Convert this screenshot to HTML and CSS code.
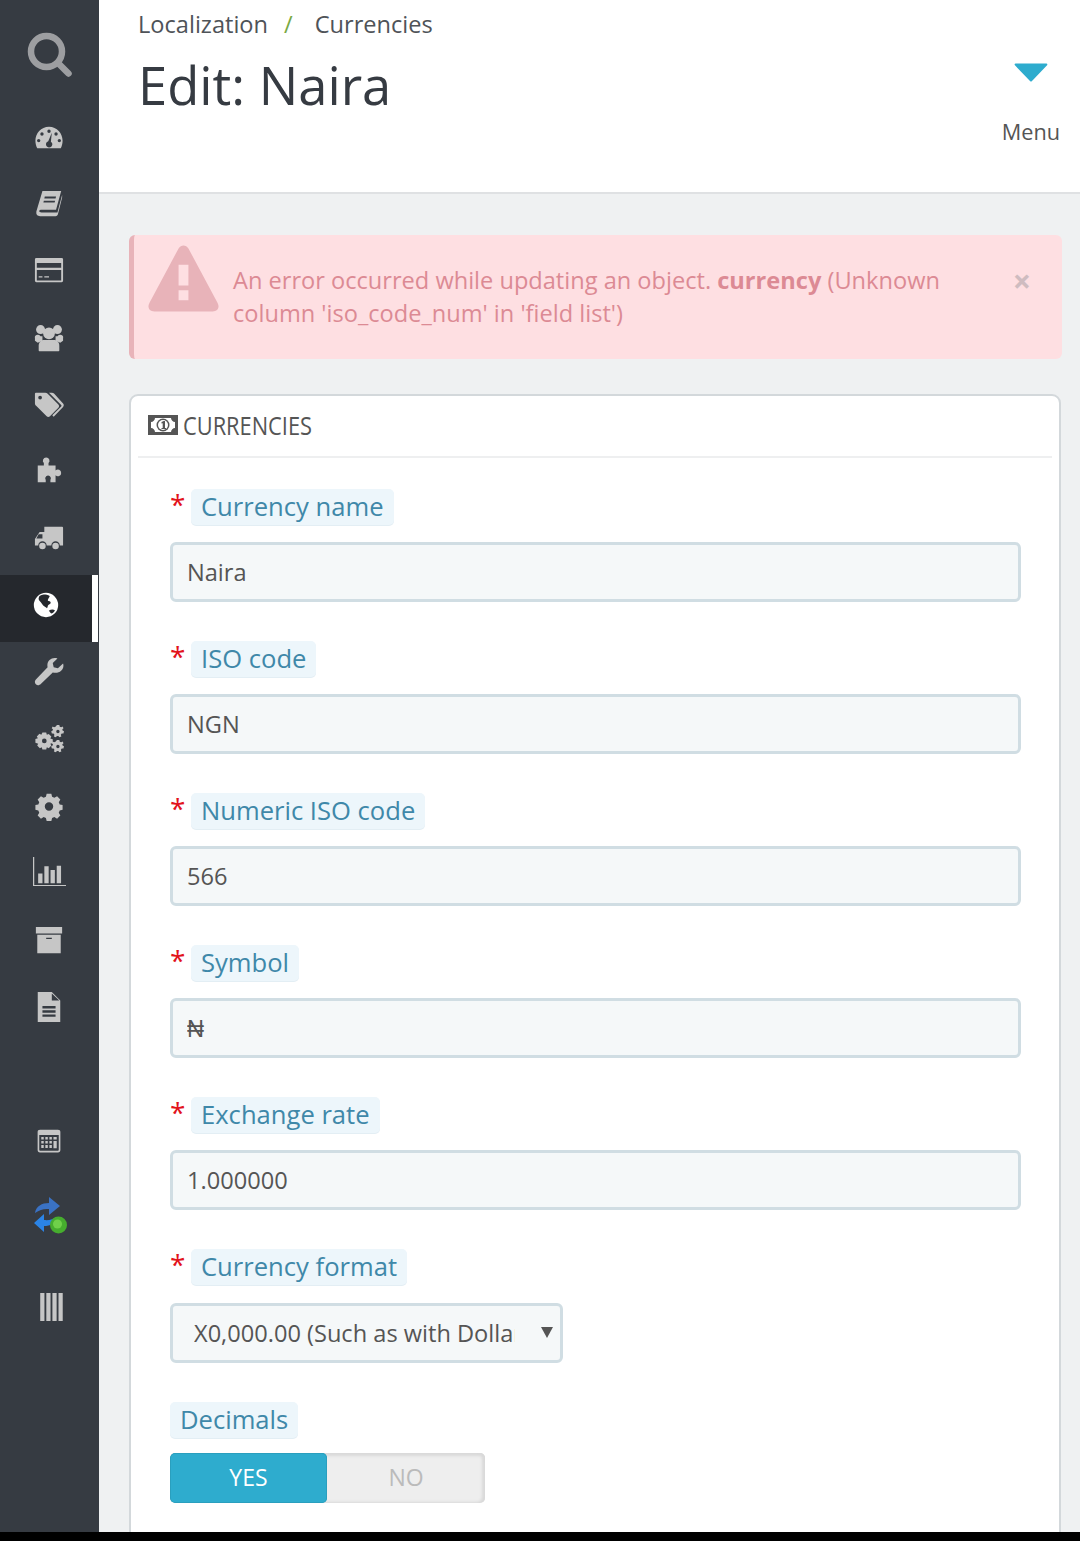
FILE: index.html
```html
<!DOCTYPE html>
<html lang="en">
<head>
<meta charset="utf-8">
<title>Edit: Naira</title>
<link rel="stylesheet" href="styles.css">
</head>
<body>
<div class="screen">
  <div class="app">
    <nav class="sidebar">
      <div class="search-item">
        <svg class="search-icon" viewBox="0 0 45 45"><circle cx="19.5" cy="19.5" r="15.5" fill="none" stroke="currentColor" stroke-width="6.5"/><path d="M31 31L41.500 41.500" fill="none" stroke="currentColor" stroke-width="6.500" stroke-linecap="round"/></svg>
      </div>
      <div class="nav-item"><svg class="ico" viewBox="0 -2 32 32"><path fill-rule="evenodd" d="M16 3C7.500 3 1.500 10 1.500 18c0 3 .8 6 2 8h25c1.200-2 2-5 2-8C30.500 10 24.500 3 16 3zM16 6a1.800 1.800 0 1 1 0 3.600A1.800 1.800 0 0 1 16 6zM8.500 9a1.800 1.800 0 1 1 0 3.600 1.800 1.800 0 0 1 0-3.600zM23.500 9a1.800 1.800 0 1 1 0 3.600 1.800 1.800 0 0 1 0-3.600zM5 16a1.800 1.800 0 1 1 0 3.600A1.800 1.800 0 0 1 5 16zM27 16a1.800 1.800 0 1 1 0 3.600 1.800 1.800 0 0 1 0-3.600zM19 9.500l-1 9.500c1.200.8 1.700 2 1.500 3.300-.3 1.800-1.800 3-3.700 2.800-1.900-.2-3.200-1.900-3-3.700.2-1.400 1.100-2.400 2.400-2.800z"/></svg></div>
      <div class="nav-item"><svg class="ico" viewBox="0 0 32 32"><path fill-rule="evenodd" d="M9 2h20l-5.500 20H8c-1.500 0-2.500.7-2.500 1.500S6.500 25 8 25h17l5-19v3l-4.500 18c-.3 1-1 2-2.500 2H6.500C3.500 29 2 27 2.500 24zM11.500 8l-.5 2h12l.5-2zM10.500 12.500l-.5 2h12l.5-2z"/></svg></div>
      <div class="nav-item"><svg class="ico" viewBox="0 1 32 32"><path fill-rule="evenodd" d="M2.500 3h27A1.500 1.500 0 0 1 31 4.500v23a1.500 1.500 0 0 1-1.500 1.500h-27A1.500 1.500 0 0 1 1 27.500v-23A1.500 1.500 0 0 1 2.500 3zM3 8.500v5h26v-5zM3 16v11h26V16zM5 22.500h4v1.500H5zM11 22.500h5v1.500h-5z"/></svg></div>
      <div class="nav-item"><svg class="ico" viewBox="0 1 32 32"><circle cx="7" cy="8" r="4.800"/><circle cx="25" cy="8" r="4.800"/><circle cx="16" cy="12" r="6.300"/><circle cx="4" cy="16.500" r="3"/><circle cx="28" cy="16.500" r="3"/><path d="M5 30V25c0-4 2.500-6 6-6h10c3.500 0 6 2 6 6v5c0 .8-.5 1-1 1H6c-.5 0-1-.2-1-1z"/><path d="M1 15h8v5l-5 2-3-2zM23 15h8v5l-3 2-5-2z"/></svg></div>
      <div class="nav-item"><svg class="ico" viewBox="0 0 32 32"><path fill-rule="evenodd" d="M2 3h10c1 0 2 .4 2.600 1L26 15.500c1 1 1 2.500 0 3.500L17 28c-1 1-2.500 1-3.500 0L2 16.500C1.400 16 1 15 1 14V4c0-.6.4-1 1-1zM6.500 6a2 2 0 1 0 0 4 2 2 0 0 0 0-4z"/><path d="M16 3h3c1 0 2 .4 2.600 1L31 14.500c1 1.200 1 2.500 0 3.500l-10 10.500-1.500-1.500L29 17.500c.5-.5.500-1 0-1.500L16 3z"/></svg></div>
      <div class="nav-item"><svg class="ico" viewBox="0 1 32 32"><path d="M13 2.500a3.500 3.500 0 0 1 2.500 6V11H23v5.500a3.500 3.500 0 0 1 6 2.500 3.500 3.500 0 0 1-6 2.500V29h-5.500v-2.500a3 3 0 1 0-5 0V29H4V11h6.500V8.500a3.500 3.500 0 0 1 2.500-6z"/></svg></div>
      <div class="nav-item"><svg class="ico" viewBox="0 0 32 32"><path fill-rule="evenodd" d="M11 4h19a1 1 0 0 1 1 1v19h-3.500a4.500 4.500 0 0 0-9 0h-5a4.500 4.500 0 0 0-9 0H1v-7l5-7.500h5zM5 12l-2.500 4.500H9V12z"/><circle cx="9" cy="24.500" r="3.500"/><circle cx="23" cy="24.500" r="3.500"/></svg></div>
      <div class="nav-item active"><svg class="ico" viewBox="0 0 32 32"><path fill-rule="evenodd" d="M16 3a13 13 0 1 1 0 26 13 13 0 0 1 0-26zM9 6.500c-1 2 -1.500 4 .5 5.500 1.500 1.200 2 3 3.500 4.500 1.500 1.500 3 1.800 4 3 1-1 .5-2.500 1.500-3.500 1-1 2.500-1 2.500-2.500s-2-1.500-3-2c-.5-1.500 1.500-3 2-5-2-1.300-4-1.700-6.500-1.700-1.500.1-3 .7-4.500 1.700zM19 22c1 1 2 3 3 3 1.500-.5 3-2 3.500-3.500-1.500-1-4.500-1-6.500.5z"/></svg></div>
      <div class="nav-item"><svg class="ico" viewBox="0 0 32 32"><path d="M31 7l-5.500 5-4.500-1-1-4.500 5-5C19-.5 13 4 14.500 11L2.500 23.500c-2 2-2 4-.5 5.500s3.500 1.500 5.500-.5L20 16.500C27 18.500 33 13 31 7z"/></svg></div>
      <div class="nav-item"><svg class="ico" viewBox="0 0 32 32"><path fill-rule="evenodd" d="M9 9h4l.7 2.500 2-.9 2.800 2.800-1.100 2 2.600.8v4l-2.600.8 1.100 2-2.800 2.800-2-1.100-.7 2.600H9l-.8-2.600-2 1.100-2.800-2.800 1.100-2L1.500 20v-4l2.600-.8-1.100-2L5.800 10.400l2 1.100zM11 15.500a2.500 2.500 0 1 0 0 5 2.500 2.500 0 0 0 0-5z"/><path fill-rule="evenodd" d="M24.500 1h2.500l.5 1.800 1.500.6 1.500-.8 1 1.800-1.300 1.100.3 1.500 1.500.8-.6 2.400-1.800 0-1 1.300.6 1.700-2.200 1-1-1.500h-1.600l-1 1.500-2.200-1 .6-1.700-1-1.300-1.800 0-.6-2.400 1.500-.8.300-1.500-1.300-1.100 1-1.800 1.500.8 1.500-.6zM25.500 6.200a1.800 1.800 0 1 0 0 3.600 1.800 1.800 0 0 0 0-3.600z"/><path fill-rule="evenodd" d="M24.500 17h2.500l.5 1.800 1.500.6 1.500-.8 1 1.800-1.300 1.100.3 1.500 1.500.8-.6 2.400-1.800 0-1 1.300.6 1.700-2.200 1-1-1.500h-1.600l-1 1.500-2.200-1 .6-1.700-1-1.300-1.800 0-.6-2.400 1.500-.8.300-1.500-1.300-1.100 1-1.800 1.500.8 1.500-.6zM25.500 22.200a1.800 1.800 0 1 0 0 3.600 1.800 1.800 0 0 0 0-3.600z"/></svg></div>
      <div class="nav-item"><svg class="ico" viewBox="0 0 32 32"><path fill-rule="evenodd" d="M13.500 3h5l.8 3.200 2.400 1 2.900-1.700 3.500 3.500-1.700 2.900 1 2.400 3.100.7v5l-3.100.8-1 2.400 1.700 2.800-3.500 3.500-2.900-1.700-2.400 1-.8 3.200h-5l-.8-3.200-2.400-1-2.900 1.700-3.500-3.500 1.700-2.800-1-2.400-3.100-.8v-5l3.100-.7 1-2.400-1.700-2.900 3.500-3.500 2.900 1.700 2.400-1zM16 12a4.500 4.500 0 1 0 0 9 4.500 4.500 0 0 0 0-9z"/></svg></div>
      <div class="nav-item"><svg class="ico ico-lg" viewBox="0 0 32 32"><path d="M0 1h1.200v27H32v1.200H0zM5 17h4.200v9.500H5zM11 10h4.200v16.500H11zM17 13.500h4.200v13H17zM23 9.500h4.200v17H23z"/></svg></div>
      <div class="nav-item"><svg class="ico" viewBox="0 0 32 32"><path fill-rule="evenodd" d="M2 2h28v7H2zM3.500 10.500h25V30h-25zM13 13.500v1.500h6v-1.500z"/></svg></div>
      <div class="nav-item"><svg class="ico" viewBox="0 0 32 32"><path fill-rule="evenodd" d="M4 0h15l9 9v23H4zM19 1.500V9h8zM9 15v2.500h14V15zM9 19.500V22h14v-2.500zM9 24v2.500h14V24z"/></svg></div>
      <div class="nav-spacer"></div>
      <div class="nav-item"><svg class="ico ico-sm" viewBox="0 0 32 32"><path fill-rule="evenodd" d="M5 2h22c2 0 3 1 3 3v22c0 2-1 3-3 3H5c-2 0-3-1-3-3V5c0-2 1-3 3-3zM4 8.500V27c0 .6.400 1 1 1h22c.6 0 1-.4 1-1V8.500zM6.500 11h3v3h-3zM11.500 11h3v3h-3zM16.500 11h3v3h-3zM21.500 11h4v3h-4zM6.500 16h3v3h-3zM11.500 16h3v3h-3zM16.500 16h3v3h-3zM21.500 16h4v9h-4zM6.500 21h3v3.500h-3zM11.500 21h3v3.500h-3zM16.500 21h3v3.500h-3z"/></svg></div>
      <div class="nav-item nav-item-sync">
        <svg class="sync" viewBox="0 0 34 40"><path fill="#3a72c4" d="M1 17C2 10 8 7 15 7V1l11 9-11 9v-6c-5-.5-9 .5-14 4z"/><path fill="#2b84e6" d="M23 21c-1 7-7 9-13 9v6L0 27l10-9v6c5 .5 9-.5 13-3z"/><circle cx="24.500" cy="29" r="8.500" fill="#46ad2e"/><circle cx="23.500" cy="28" r="4.500" fill="#6fd04a"/></svg>
      </div>
      <div class="nav-item nav-item-bars"><svg class="ico" viewBox="0 0 32 32"><path d="M4.500 1H9v30H4.500zM11 1h4.500v30H11zM17.500 1H22v30h-4.500zM24 1h4.500v30H24z"/></svg></div>
    </nav>
    <main class="main">
      <header class="page-head">
        <div class="head-text">
          <div class="crumbs"><span>Localization</span><span class="crumb-sep">/</span><span>Currencies</span></div>
          <h1 class="title">Edit: Naira</h1>
        </div>
        <div class="menu-toggle">
          <svg class="menu-arrow" viewBox="0 0 32 18"><path d="M1.500 1.500h29L16 16.500z"/></svg>
          <span class="menu-label">Menu</span>
        </div>
      </header>
      <div class="content">
        <div class="alert">
          <svg class="alert-icon" viewBox="0 0 72 68"><path fill-rule="evenodd" d="M31 3.500c2.500-4 7.500-4 10 0l29.500 55c2.500 4.500 .5 9-5 9H6.500c-5.500 0-7.500-4.500-5-9zM31 20v21h10V20zM31 46v10h10V46z"/></svg>
          <p class="alert-text">An error occurred while updating an object. <b>currency</b> (Unknown column 'iso_code_num' in 'field list')</p>
          <span class="alert-close">×</span>
        </div>
        <section class="panel">
          <div class="panel-head">
            <svg class="money" viewBox="0 0 30 20"><path fill-rule="evenodd" d="M0 0h30v20H0zM7 3c0 2-2 4-4 4v6c2 0 4 2 4 4h16c0-2 2-4 4-4V7c-2 0-4-2-4-4z"/><circle cx="15" cy="10" r="6.500"/><circle cx="15" cy="10" r="5" fill="#fff"/><path d="M13.500 7l2.200-1h1.300v7h1v1h-4.500v-1h1.200V8.200l-1.200.4z"/></svg>
            <span class="panel-title">CURRENCIES</span>
          </div>
          <div class="form-body">
            <div class="field"><div class="label-row"><span class="req">*</span><label class="chip">Currency name</label></div><input class="text-input" value="Naira"></div>
            <div class="field"><div class="label-row"><span class="req">*</span><label class="chip">ISO code</label></div><input class="text-input" value="NGN"></div>
            <div class="field"><div class="label-row"><span class="req">*</span><label class="chip">Numeric ISO code</label></div><input class="text-input" value="566"></div>
            <div class="field"><div class="label-row"><span class="req">*</span><label class="chip">Symbol</label></div><input class="text-input" value="₦"></div>
            <div class="field"><div class="label-row"><span class="req">*</span><label class="chip">Exchange rate</label></div><input class="text-input" value="1.000000"></div>
            <div class="field field-format"><div class="label-row label-row-format"><span class="req">*</span><label class="chip">Currency format</label></div>
              <div class="select-wrap"><select class="select"><option>X0,000.00 (Such as with Dollars)</option></select><span class="select-arrow"></span></div>
            </div>
            <div class="field"><div class="label-row label-row-plain"><label class="chip">Decimals</label></div>
              <div class="switch"><span class="sw sw-on">YES</span><span class="sw sw-off">NO</span></div>
            </div>
          </div>
        </section>
      </div>
    </main>
  </div>
  <div class="bottom-bar"></div>
</div>
</body>
</html>
```

FILE: styles.css
```css
* { box-sizing: border-box; }
html, body { margin: 0; padding: 0; }
body { font-family: "Open Sans", "Noto Sans", sans-serif; color: #555; background: #000; }
.screen { width: 1080px; height: 1541px; overflow: hidden; display: flex; flex-direction: column; }
.app { display: flex; height: 1532px; overflow: hidden; background: #eff1f2; }
.bottom-bar { height: 9px; background: #000; }

.sidebar { width: 99px; flex: none; background: #363b42; color: #c6c6c6; display: flex; flex-direction: column; }
.search-item { height: 107px; flex: none; padding: 32px 0 0 27px; color: #9d9ea1; }
.search-icon { display: block; width: 45px; height: 45px; }
.nav-item { height: 66.900px; flex: none; display: flex; align-items: center; justify-content: center; padding: 0 1px 7px 0; }
.nav-item .ico { width: 30px; height: 30px; fill: currentColor; display: block; }
.nav-item .ico-lg { width: 33px; height: 33px; }
.nav-item .ico-sm { width: 26px; height: 26px; }
.nav-item.active { background: #25282d; color: #fff; border-right: 6px solid #fff; margin-right: 1px; padding-right: 0; }
.nav-spacer { height: 67.400px; flex: none; }
.nav-item-sync { margin-top: 8px; padding-left: 4px; }
.nav-item-bars { margin-top: 24px; padding-left: 3px; }
.sync { width: 34px; height: 40px; display: block; }

.main { flex: 1; min-width: 0; display: flex; flex-direction: column; }
.page-head { height: 194px; flex: none; background: #fff; border-bottom: 2px solid #dfe1e3; display: flex; justify-content: space-between; padding: 7px 20px 0 39px; }
.crumbs { font-size: 23.600px; line-height: 34px; color: #4f5358; display: flex; gap: 16px; }
.crumb-sep { color: #79a944; margin-right: 6px; }
.title { margin: 10px 0 0 0; font-size: 52.500px; line-height: 68px; font-weight: 400; color: #363b42; }
.menu-toggle { display: flex; flex-direction: column; align-items: center; padding-top: 56px; }
.menu-arrow { width: 34px; height: 19px; display: block; fill: #2eacce; stroke: #2eacce; stroke-width: 2; stroke-linejoin: round; margin-top: 0; }
.menu-label { margin-top: 35px; font-size: 21.700px; line-height: 29px; color: #555; }

.content { flex: 1; padding: 41px 18px 0 30px; min-height: 0; }
.alert { height: 124px; background: #fedfe2; border-left: 5px solid #e8b3b9; border-radius: 6px; display: flex; align-items: flex-start; padding: 10px 31px 0 14px; color: #dc8a94; }
.alert-icon { width: 71px; height: 67px; fill: #e8b3b9; flex: none; }
.alert-text { margin: 19px 0 0 14px; font-size: 23.600px; line-height: 33px; flex: 1; }
.alert-close { font-size: 32px; line-height: 34px; font-weight: 700; color: #cfbcc0; margin-top: 19px; margin-left: 60px; }

.panel { margin: 35px 1px 0 0; height: 1200px; background: #fff; border: 2px solid #d3d8db; border-radius: 9px; padding: 0 7px; }
.panel-head { height: 62px; display: flex; align-items: center; gap: 5px; border-bottom: 2px solid #eeeff0; padding: 0 0 2px 10px; font-size: 25.500px; color: #555; }
.panel-title { display: inline-block; transform: scaleX(.855); transform-origin: left center; }
.money { width: 30px; height: 20px; fill: #555; flex: none; }
.form-body { padding: 31px 31px 0 32px; }
.field { height: 152px; }
.field-format { height: 153px; }
.label-row { display: flex; align-items: flex-start; height: 53px; }
.label-row-format { height: 54px; }
.label-row-plain { height: 51px; }
.req { width: 21px; flex: none; color: #e2121b; font-size: 28px; line-height: 30px; }
.chip { height: 36px; padding: 0 10px; border-radius: 5px; background: #edf6fb; box-shadow: 0 1px 0 #e3eef4; color: #3f88a9; font-size: 25.600px; line-height: 35px; }
.text-input { display: block; width: 100%; height: 60px; border: 3px solid #d0dde3; border-radius: 6px; background: #f5f8f9; color: #555; font: 400 23.600px "Open Sans", sans-serif; padding: 0 14px; outline: none; }
.select-wrap { position: relative; width: 393px; height: 60px; }
.select { appearance: none; -webkit-appearance: none; display: block; width: 100%; height: 60px; border: 3px solid #d0dde3; border-radius: 6px; background: #f5f8f9; color: #555; font: 400 23.600px "Open Sans", sans-serif; padding: 0 45px 0 21px; outline: none; }
.select-arrow { position: absolute; right: 10px; top: 24px; width: 0; height: 0; border-left: 6px solid transparent; border-right: 6px solid transparent; border-top: 11px solid #555; }
.switch { display: flex; width: 315px; height: 50px; border-radius: 5px; background: #eee; overflow: hidden; box-shadow: inset -3px -1px 3px #d9d9d9, inset 0 3px 3px #d9d9d9; }
.sw { display: flex; align-items: center; justify-content: center; font-size: 23px; padding-bottom: 2px; }
.sw-on { width: 157px; background: #2eacce; color: #fff; border-radius: 5px; box-shadow: 0 0 0 1px #2a9fbe inset; }
.sw-off { width: 158px; color: #bbb; }
```
